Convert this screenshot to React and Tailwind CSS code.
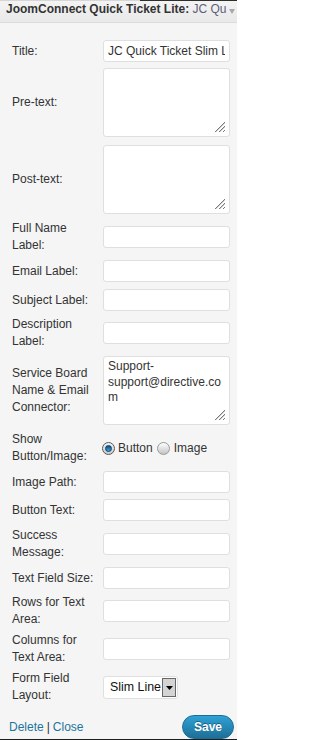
import React from "react";

function Grabber() {
  return (
    <svg className="absolute right-[3px] bottom-[3px]" width="12" height="12" viewBox="0 0 12 12">
      <line x1="11" y1="1" x2="1" y2="11" stroke="#7a7a7a" strokeWidth="1" />
      <line x1="11" y1="2" x2="2" y2="11" stroke="#d0d0d0" strokeWidth="1" />
      <line x1="11" y1="5" x2="5" y2="11" stroke="#7a7a7a" strokeWidth="1" />
      <line x1="11" y1="6" x2="6" y2="11" stroke="#d0d0d0" strokeWidth="1" />
      <line x1="11" y1="9" x2="9" y2="11" stroke="#7a7a7a" strokeWidth="1" />
    </svg>
  );
}

function TextBox({ value = "" }) {
  return (
    <input
      readOnly
      value={value}
      className="h-[22px] w-[127px] bg-white border border-[#dfdfdf] rounded-[3px] px-[4px] text-[12px] text-[#333] outline-none"
    />
  );
}

function Area({ children }) {
  return (
    <div className="relative h-[69px] w-[127px] bg-white border border-[#dfdfdf] rounded-[3px] px-[4px] pt-[2px] text-[12px] leading-[15.5px] text-[#333]">
      {children}
      <Grabber />
    </div>
  );
}

function Row({ label, children, className = "" }) {
  return (
    <div className={"flex items-center " + className}>
      <div className="w-[91px] shrink-0 leading-[17px] text-[#333]">{label}</div>
      <div className="flex items-center">{children}</div>
    </div>
  );
}

function Radio({ checked }) {
  return checked ? (
    <span className="shrink-0 w-[13px] h-[13px] rounded-full border border-[#5a5a5a] bg-gradient-to-b from-[#f4f4f4] to-[#c9c9c9] flex items-center justify-center">
      <span className="block w-[7px] h-[7px] rounded-full bg-gradient-to-b from-[#0d4f86] to-[#3da3e6] border border-[#0b3c66]" />
    </span>
  ) : (
    <span className="shrink-0 block w-[13px] h-[13px] rounded-full border border-[#9a9a9a] bg-gradient-to-b from-[#ffffff] to-[#c4c4c4]" />
  );
}

export default function App() {
  return (
    <div className="w-[237px] h-[740px] overflow-hidden bg-[#f5f5f5] border-b border-[#1e1e1e] flex flex-col font-['Liberation_Sans',Arial,sans-serif] text-[12px] text-[#333]">
      <div className="flex h-px shrink-0">
        <div className="w-[140px] bg-[#d6d6d6]" />
        <div className="flex-1 bg-[#2e2e2e]" />
      </div>
      <div className="h-[22px] shrink-0 flex items-start pt-[1px] pl-[6px] bg-gradient-to-b from-[#f3f3f3] to-[#e9e9e9] border-b border-[#dcdcdc]">
        <div className="w-[216px] whitespace-nowrap leading-[14px] font-bold text-[#333]">
          JoomConnect Quick Ticket Lite: <span className="font-normal text-[#5e5e78]">JC Qu</span>
        </div>
        <svg className="ml-[7px] mt-[7px]" width="6" height="5" viewBox="0 0 6 5">
          <polygon points="0,0 6,0 3,5" fill="#a8a8a8" />
        </svg>
      </div>

      <div className="flex flex-col pl-[12px] pt-[17px]">
        <Row label="Title:">
          <TextBox value="JC Quick Ticket Slim Line" />
        </Row>
        <Row label="Pre-text:" className="mt-[6px]">
          <Area />
        </Row>
        <Row label="Post-text:" className="mt-[8px]">
          <Area />
        </Row>
        <Row label={<>Full Name<br />Label:</>} className="mt-[6px]">
          <TextBox />
        </Row>
        <Row label="Email Label:" className="mt-[6px]">
          <TextBox />
        </Row>
        <Row label="Subject Label:" className="mt-[7px]">
          <TextBox />
        </Row>
        <Row label={<>Description<br />Label:</>} className="mt-[5px]">
          <TextBox />
        </Row>
        <Row label={<>Service Board<br />Name &amp; Email<br />Connector:</>} className="mt-[6px]">
          <Area>
            Support-
            <br />
            support@directive.co
            <br />m
          </Area>
        </Row>
        <Row label={<>Show<br />Button/Image:</>} className="mt-[6px]">
          <div className="flex items-center -ml-[1px]">
            <Radio checked />
            <span className="ml-[3px]">Button</span>
            <span className="ml-[4px]">
              <Radio />
            </span>
            <span className="ml-[4px]">Image</span>
          </div>
        </Row>
        <Row label="Image Path:" className="mt-[6px]">
          <TextBox />
        </Row>
        <Row label="Button Text:" className="mt-[6px]">
          <TextBox />
        </Row>
        <Row label={<>Success<br />Message:</>} className="mt-[6px]">
          <TextBox />
        </Row>
        <Row label="Text Field Size:" className="mt-[6px]">
          <TextBox />
        </Row>
        <Row label={<>Rows for Text<br />Area:</>} className="mt-[5px]">
          <TextBox />
        </Row>
        <Row label={<>Columns for<br />Text Area:</>} className="mt-[4px]">
          <TextBox />
        </Row>
        <Row label={<>Form Field<br />Layout:</>} className="mt-[4px]">
          <div className="h-[23px] w-[75px] bg-white border border-[#dfdfdf] rounded-[3px] flex items-center pl-[6px] pr-[1px] justify-between">
            <span className="text-[12.4px] text-[#111] whitespace-nowrap">Slim Line</span>
            <span className="w-[14px] h-[19px] border border-[#666] bg-[#d4d4d4] flex items-center justify-center">
              <svg width="7" height="4" viewBox="0 0 7 4" className="mt-[2px]">
                <polygon points="0,0 7,0 3.5,4" fill="#000" />
              </svg>
            </span>
          </div>
        </Row>
      </div>

      <div className="flex items-center justify-between pl-[9px] pr-[3px] mt-[11px]">
        <div className="whitespace-nowrap">
          <span className="text-[#21759b]">Delete</span>
          <span className="text-[#333] mx-[3px]">|</span>
          <span className="text-[#21759b]">Close</span>
        </div>
        <div className="w-[52px] h-[24px] rounded-full border border-[#1f6d92] bg-gradient-to-b from-[#2ea2d6] to-[#1e6f96] flex items-center justify-center text-white font-bold [text-shadow:0_-1px_0_rgba(0,0,0,0.35)]">
          Save
        </div>
      </div>
    </div>
  );
}
